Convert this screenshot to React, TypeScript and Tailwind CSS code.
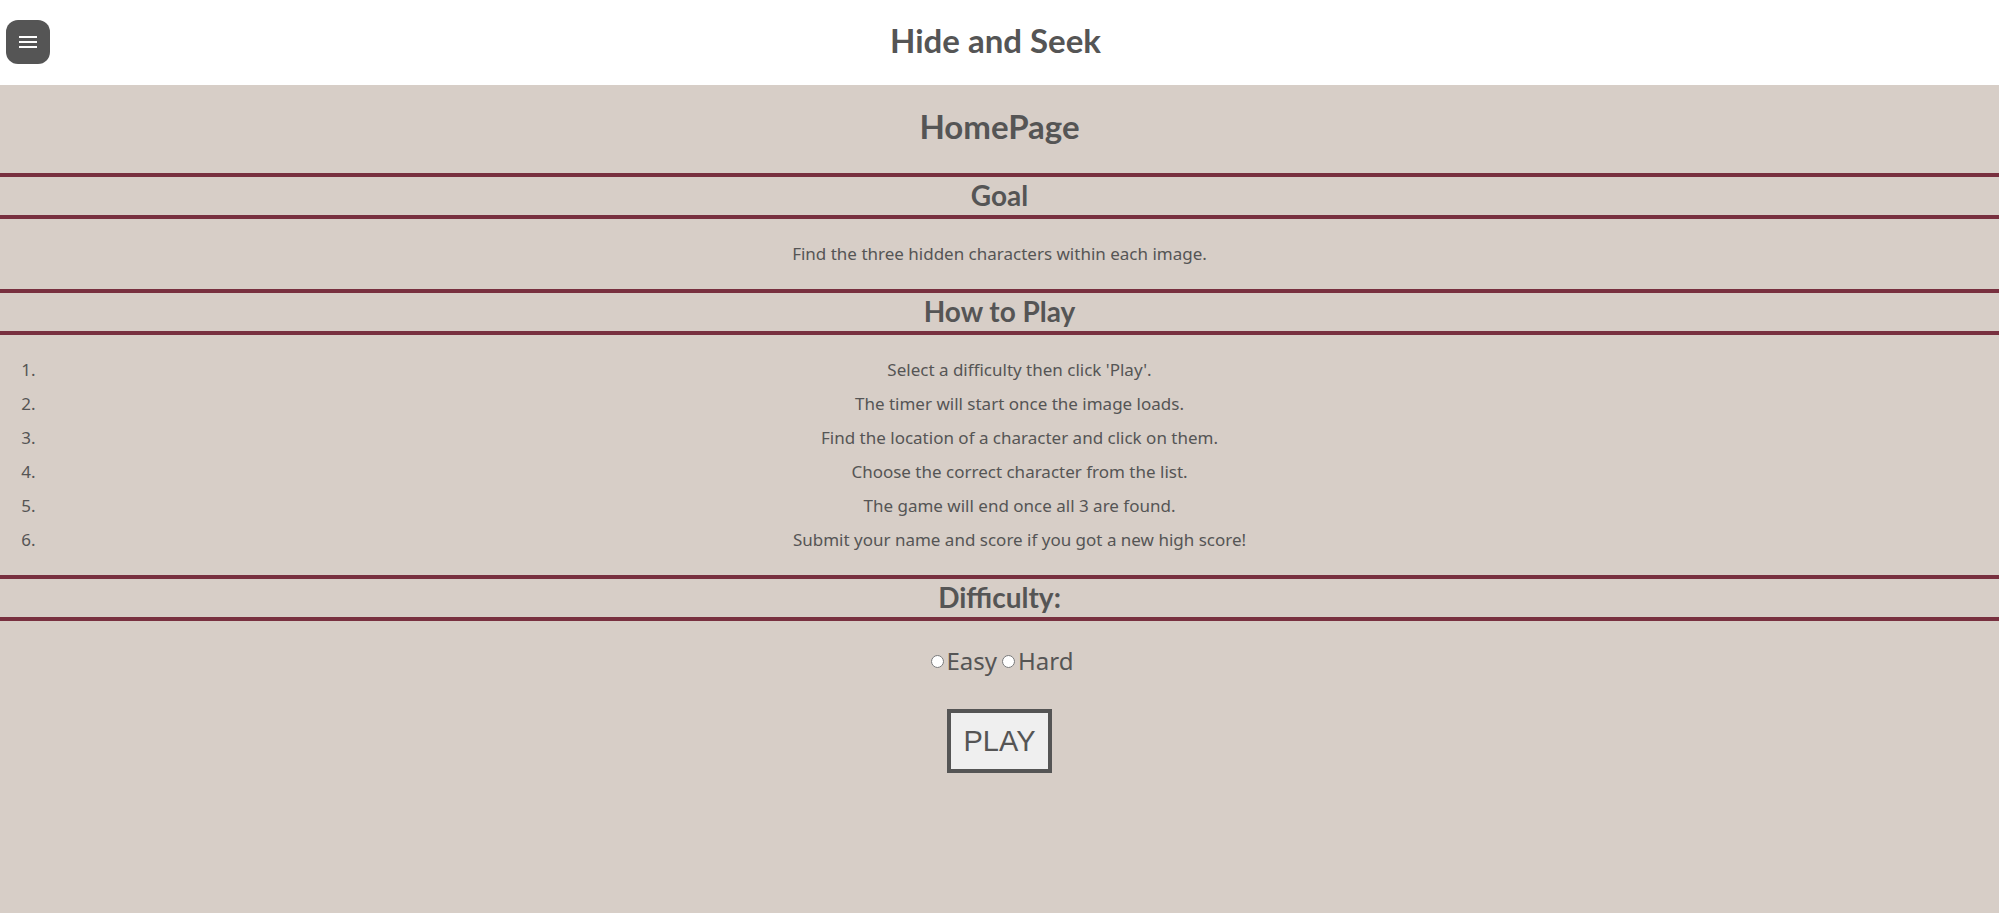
import { useState } from "react";
import type { ReactNode } from "react";

const steps = [
  "Select a difficulty then click 'Play'.",
  "The timer will start once the image loads.",
  "Find the location of a character and click on them.",
  "Choose the correct character from the list.",
  "The game will end once all 3 are found.",
  "Submit your name and score if you got a new high score!",
];

const levels = ["Easy", "Hard"];

function SectionTitle({ children }: { children: ReactNode }) {
  return (
    <h2 className="border-y-4 border-[#78303f] pb-0.5 text-center font-[Lato,sans-serif] text-[28px] leading-9 font-bold">
      {children}
    </h2>
  );
}

function Header() {
  return (
    <header className="flex h-[85px] items-center justify-between bg-white px-1.5 pb-0.5">
      <button
        type="button"
        aria-label="Menu"
        className="flex size-11 items-center justify-center rounded-xl bg-[#555555] text-white"
      >
        <svg viewBox="0 0 24 24" className="size-6" fill="currentColor" aria-hidden="true">
          <path d="M3 18h18v-2H3v2zm0-5h18v-2H3v2zm0-7v2h18V6H3z" />
        </svg>
      </button>
      <h1 className="pb-1 font-[Lato,sans-serif] text-[33px] leading-[46px] font-bold">Hide and Seek</h1>
      <div className="w-13" />
    </header>
  );
}

export default function App() {
  const [level, setLevel] = useState("");

  return (
    <div className="flex min-h-screen flex-col bg-[#d7cec7] font-['Noto_Sans',sans-serif] text-[17px] leading-[34px] text-[#555555]">
      <Header />
      <main>
        <h1 className="pt-[18px] pb-6 text-center font-[Lato,sans-serif] text-[33px] leading-[46px] font-bold">
          HomePage
        </h1>

        <SectionTitle>Goal</SectionTitle>
        <p className="py-[18px] text-center">Find the three hidden characters within each image.</p>

        <SectionTitle>How to Play</SectionTitle>
        <ol className="list-decimal py-[18px] pl-10 text-center">
          {steps.map((step) => (
            <li key={step}>{step}</li>
          ))}
        </ol>

        <SectionTitle>Difficulty:</SectionTitle>
        <form className="flex flex-col items-center pt-[18px]" onSubmit={(e) => e.preventDefault()}>
          <div className="flex h-[70px] items-start justify-center">
            {levels.map((name) => (
              <label key={name} className="flex items-center text-[24px] leading-[44px]">
                <input
                  type="radio"
                  name="difficulty"
                  value={name}
                  checked={level === name}
                  onChange={() => setLevel(name)}
                  className="mr-[3px] ml-[5px] size-[13px]"
                />
                {name}
              </label>
            ))}
          </div>
          <button
            type="submit"
            className="border-4 border-[#555555] bg-[#efefef] px-3 py-2 font-['Liberation_Sans',sans-serif] text-[29px] leading-10"
          >
            PLAY
          </button>
        </form>
      </main>
    </div>
  );
}
